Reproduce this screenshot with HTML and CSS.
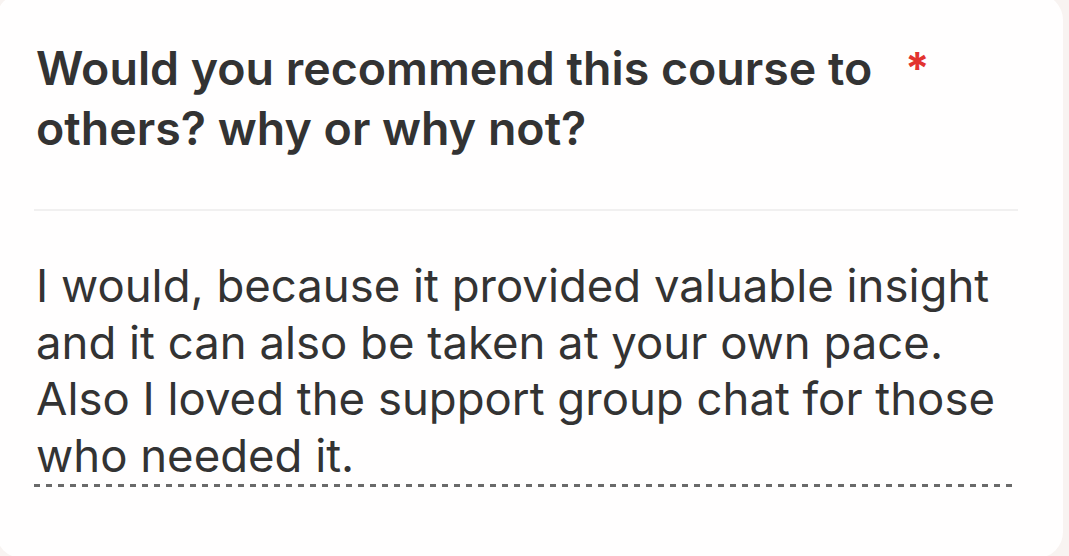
FILE: index.html
```html
<!DOCTYPE html>
<html>
<head>
<meta charset="utf-8">
<link rel="stylesheet" href="styles.css">
</head>
<body>
<div class="card">
  <div class="question">
    <h2 class="title">Would you recommend this course to others? why or why not?</h2>
    <span class="required">*</span>
  </div>
  <div class="divider"></div>
  <div class="answer">
    <p class="answer-text">I would, because it provided valuable insight and it can also be taken at your own pace. Also I loved the support group chat for those who needed it.</p>
    <div class="dashes"></div>
  </div>
</div>
</body>
</html>
```
FILE: styles.css
```css
html, body {
  margin: 0;
  padding: 0;
  background: #f8f3f1;
  overflow: hidden;
}
body {
  font-family: Inter, "Liberation Sans", sans-serif;
  color: #333333;
}
.card {
  margin: -6px 0 0 -4px;
  width: 1067px;
  height: 564px;
  box-sizing: border-box;
  background: #fffefe;
  border-radius: 26px;
  padding: 44px 51px 0 40px;
}
.question {
  display: flex;
  align-items: flex-start;
  gap: 19px;
}
.title {
  margin: 0;
  width: 850px;
  font-size: 46.5px;
  font-weight: 600;
  line-height: 60px;
  letter-spacing: 0;
}
.required {
  color: #e2332f;
  font-size: 44px;
  font-weight: 700;
  line-height: 60px;
}
.divider {
  margin-top: 51px;
  margin-right: -6px;
  margin-left: -2px;
  height: 2px;
  background: #f1f0f0;
}
.answer {
  margin-top: 47px;
}
.answer-text {
  margin: 0;
  font-size: 45.5px;
  font-weight: 400;
  line-height: 56.5px;
  width: 1000px;
}
.dashes {
  margin-top: 0;
  margin-left: -2px;
  width: 978px;
  height: 3px;
  background: repeating-linear-gradient(to right, #6a6a6a 0 6px, transparent 6px 12px);
}
```
